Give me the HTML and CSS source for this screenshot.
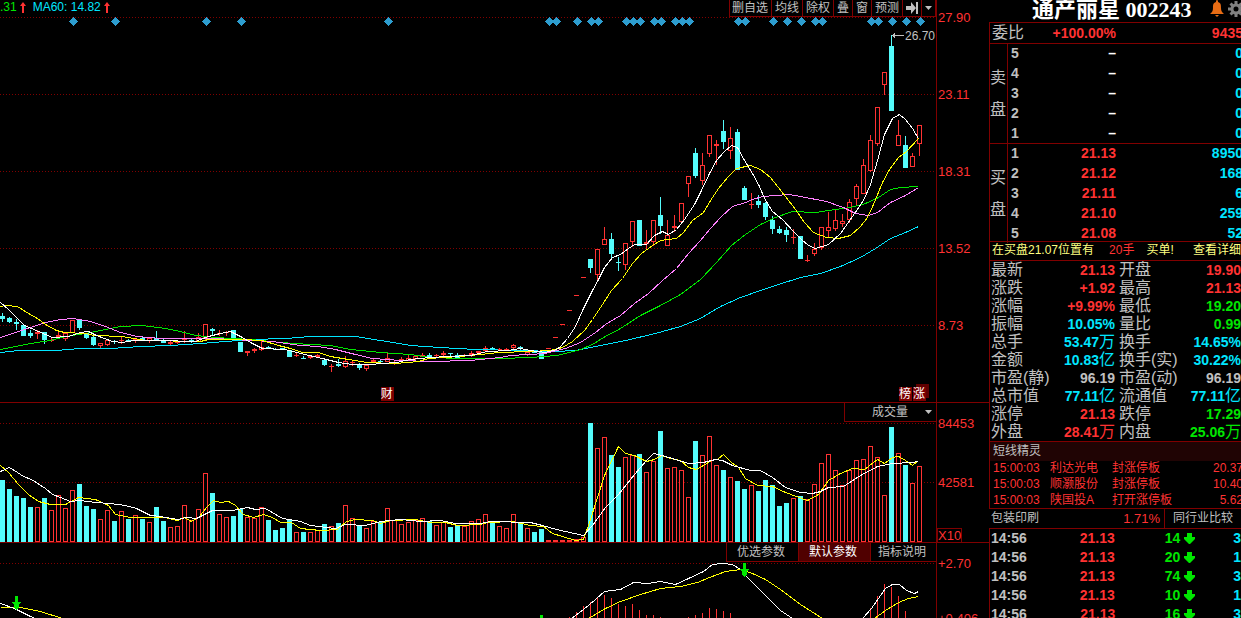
FILE: index.html
```html
<!DOCTYPE html>
<html lang="zh-CN">
<head>
<meta charset="utf-8">
<title>通产丽星 002243</title>
<link rel="stylesheet" href="styles.css">
</head>
<body>
<div class="app">
  <main class="charts">
    <section class="pane price-pane">
      <svg class="plot" id="price" viewBox="0 0 936 402" preserveAspectRatio="none"></svg>
      <header class="pane-head">
        <div class="averages">
          <span class="green">.31</span>
          <svg class="up" viewBox="0 0 6 11"><path d="M3 0L6 4H4V11H2V4H0Z"/></svg>
          <span class="cyan">MA60: 14.82</span>
          <svg class="up" viewBox="0 0 6 11"><path d="M3 0L6 4H4V11H2V4H0Z"/></svg>
        </div>
        <nav class="toolbar">
          <button>删自选</button><button>均线</button><button>除权</button><button>叠</button><button>窗</button><button>预测</button><button aria-label="移到最后"><svg width="12" height="12" viewBox="0 0 12 12"><path d="M0 4H5V0L10 6L5 12V8H0ZM10 0H12V12H10Z"/></svg></button><button aria-label="更多"><svg width="7" height="4" viewBox="0 0 7 4"><path d="M0 0H7L3.500 4Z"/></svg></button>
        </nav>
      </header>
      <span class="badge finance">财</span>
      <span class="badge shade"></span>
      <span class="badge rank">榜</span>
      <span class="badge rise">涨</span>
    </section>
    <aside class="axis price-axis"><span>27.90</span><span>23.11</span><span>18.31</span><span>13.52</span><span>8.73</span></aside>

    <section class="pane">
      <svg class="plot" id="volume" viewBox="0 402 936 140" preserveAspectRatio="none"></svg>
      <header class="pane-head">
        <label class="indicator"><select aria-label="指标"><option>成交量</option></select><svg width="7" height="4" viewBox="0 0 7 4"><path d="M0 0H7L3.500 4Z"/></svg></label>
      </header>
    </section>
    <aside class="axis volume-axis"><span>84453</span><span>42581</span><span class="unit">X10</span></aside>

    <section class="pane">
      <svg class="plot" id="macd" viewBox="0 542 936 76" preserveAspectRatio="none"></svg>
      <header class="pane-head">
        <nav class="tabs"><button>优选参数</button><button class="active">默认参数</button><button>指标说明</button></nav>
      </header>
    </section>
    <aside class="axis macd-axis"><span>+2.70</span><span>+0.406</span></aside>
  </main>

  <aside class="quote">
    <header class="title">
      <h1>通产丽星 002243</h1>
      <svg class="bell" viewBox="0 0 14 17"><path d="M7 0C8 0 8 1 8 2C11 3 11 5 11 8C11 11 12 12 14 14H0C2 12 3 11 3 8C3 5 3 3 6 2C6 1 6 0 7 0ZM5 15H9L7 17Z"/></svg>
      <svg class="gear" viewBox="-8 -8 16 16"><circle r="4"/><path d="M0-8V-4M0 8V4M-8 0H-4M8 0H4M-5.500-5.500L-3-3M5.500 5.500L3 3M-5.500 5.500L-3 3M5.500-5.500L3-3"/></svg>
    </header>
    <div class="ratio bleed"><span class="label">委比</span><b class="red">+100.00%</b><b class="red">9435</b></div>
    <div class="book">
      <div class="side"><span>卖</span><span>盘</span></div>
      <table class="orders">
        <tr><th>5</th><td>–</td><td>0</td></tr>
        <tr><th>4</th><td>–</td><td>0</td></tr>
        <tr><th>3</th><td>–</td><td>0</td></tr>
        <tr><th>2</th><td>–</td><td>0</td></tr>
        <tr><th>1</th><td>–</td><td>0</td></tr>
      </table>
    </div>
    <div class="book buy">
      <div class="side"><span>买</span><span>盘</span></div>
      <table class="orders bids">
        <tr><th>1</th><td>21.13</td><td>8950</td></tr>
        <tr><th>2</th><td>21.12</td><td>168</td></tr>
        <tr><th>3</th><td>21.11</td><td>6</td></tr>
        <tr><th>4</th><td>21.10</td><td>259</td></tr>
        <tr><th>5</th><td>21.08</td><td>52</td></tr>
      </table>
    </div>
    <div class="notice"><span>在买盘21.07位置有</span><span class="red">20手</span><span>买单!</span><a href="#detail">查看详细</a></div>
    <dl class="stats">
      <dt>最新</dt><dd class="red">21.13</dd><dt>开盘</dt><dd class="red">19.90</dd>
      <dt>涨跌</dt><dd class="red">+1.92</dd><dt>最高</dt><dd class="red">21.13</dd>
      <dt>涨幅</dt><dd class="red">+9.99%</dd><dt>最低</dt><dd class="green">19.20</dd>
      <dt>振幅</dt><dd class="cyan">10.05%</dd><dt>量比</dt><dd class="green">0.99</dd>
      <dt>总手</dt><dd class="cyan">53.47<i>万</i></dd><dt>换手</dt><dd class="cyan">14.65%</dd>
      <dt>金额</dt><dd class="cyan">10.83<i>亿</i></dd><dt>换手(实)</dt><dd class="cyan">30.22%</dd>
      <dt>市盈(静)</dt><dd>96.19</dd><dt>市盈(动)</dt><dd>96.19</dd>
      <dt>总市值</dt><dd class="cyan">77.11<i>亿</i></dd><dt>流通值</dt><dd class="cyan">77.11<i>亿</i></dd>
      <dt>涨停</dt><dd class="red">21.13</dd><dt>跌停</dt><dd class="green">17.29</dd>
      <dt>外盘</dt><dd class="red">28.41<i>万</i></dd><dt>内盘</dt><dd class="green">25.06<i>万</i></dd>
    </dl>
    <h2 class="feed-title">短线精灵</h2>
    <div class="feed bleed">
      <span>15:00:03</span><span>利达光电</span><span>封涨停板</span><span>20.37</span>
      <span>15:00:03</span><span>顺灏股份</span><span>封涨停板</span><span>10.40</span>
      <span>15:00:03</span><span>陕国投A</span><span>打开涨停板</span><span>5.62</span>
    </div>
    <div class="industry"><span>包装印刷</span><span class="change">1.71%</span><button>同行业比较</button></div>
    <table class="ticks">
      <tr><td>14:56</td><td>21.13</td><td>14</td><td><svg class="down" viewBox="0 0 11 11"><path d="M3 0H8V4H11V6L6 11H5L0 6V4H3Z"/></svg></td><td>3</td></tr>
      <tr><td>14:56</td><td>21.13</td><td>20</td><td><svg class="down" viewBox="0 0 11 11"><path d="M3 0H8V4H11V6L6 11H5L0 6V4H3Z"/></svg></td><td>1</td></tr>
      <tr><td>14:56</td><td>21.13</td><td>74</td><td><svg class="down" viewBox="0 0 11 11"><path d="M3 0H8V4H11V6L6 11H5L0 6V4H3Z"/></svg></td><td>3</td></tr>
      <tr><td>14:56</td><td>21.13</td><td>10</td><td><svg class="down" viewBox="0 0 11 11"><path d="M3 0H8V4H11V6L6 11H5L0 6V4H3Z"/></svg></td><td>1</td></tr>
      <tr><td>14:56</td><td>21.13</td><td>16</td><td><svg class="down" viewBox="0 0 11 11"><path d="M3 0H8V4H11V6L6 11H5L0 6V4H3Z"/></svg></td><td>3</td></tr>
    </table>
  </aside>
</div>
<script src="chart.js"></script>
</body>
</html>
```

FILE: styles.css
```css
* { box-sizing: border-box; }
body {
  margin: 0;
  overflow: hidden;
  background: #000;
  color: #c0c0c0;
  font: 12px/16px "Liberation Sans", "Noto Sans CJK SC", sans-serif;
}
button, select {
  margin: 0;
  padding: 0;
  border: 0;
  background: none;
  color: inherit;
  font: inherit;
  cursor: pointer;
}
table { border-collapse: collapse; }
td, th { padding: 0; }
.red { color: #ff3232; }
.green { color: #00e600; }
.cyan { color: #00e6ff; }

.app {
  display: grid;
  grid-template-columns: 1fr 252px;
  height: 100vh;
}

/* charts */
.charts {
  display: grid;
  grid-template-columns: 1fr 53px;
  grid-template-rows: 402fr 140fr 76fr;
  min-width: 0;
  overflow: hidden;
}
.pane {
  position: relative;
  display: grid;
  min-width: 0;
  min-height: 0;
  overflow: hidden;
  border-right: 1px solid #800000;
  margin-right: -1px;
}
.plot, .pane-head { grid-area: 1 / 1; }
.plot { width: 100%; height: 100%; shape-rendering: crispEdges; }
.pane-head {
  position: relative;
  display: flex;
  justify-content: flex-end;
  align-self: start;
}
.axis {
  display: flex;
  flex-direction: column;
  align-items: flex-start;
  min-height: 0;
  padding-left: 2px;
  overflow: hidden;
  color: #ff3232;
  font-size: 13px;
}
.volume-axis, .macd-axis { border-top: 1px solid #800000; }
.price-axis { padding-top: 10px; gap: 61px; }
.volume-axis { padding-top: 13px; gap: 43px; }
.macd-axis { padding-top: 13px; gap: 39px; }
.unit {
  margin: -6px 0 0 -1px;
  border: 1px solid #800000;
  line-height: 13px;
}
.averages {
  display: flex;
  align-items: center;
  gap: 3px;
  height: 14px;
  margin-right: auto;
}
.averages .cyan { margin-left: 4px; }
.up { width: 6px; height: 11px; fill: #ff3232; }
.toolbar {
  display: flex;
  border: solid #800000;
  border-width: 0 0 1px 1px;
  background: #000;
}
.toolbar button {
  height: 16px;
  padding: 0 3px;
  border-right: 1px solid #800000;
  line-height: 15px;
}
.toolbar button:first-child { padding-left: 2px; }
.toolbar svg, .indicator svg { display: block; fill: #c0c0c0; }
.indicator {
  display: flex;
  align-items: center;
  gap: 16px;
  height: 20px;
  padding: 0 4px 0 27px;
  border: solid #800000;
  border-width: 1px 0 1px 1px;
  background: #000;
}
.indicator select { appearance: none; width: 37px; outline: 0; }
.tabs {
  display: flex;
  border: 1px solid #800000;
  border-right: 0;
  background: #000;
}
.tabs button { height: 18px; padding: 0 13px 0 10px; }
.tabs button:last-child { padding: 0 10px 0 7px; }
.tabs .active { background: #500000; color: #fff; border: solid #800000; border-width: 0 1px; }
.badge {
  position: absolute;
  bottom: 1px;
  width: 13px;
  height: 14px;
  background: #7c0000;
  color: #fff;
  line-height: 14px;
}
.finance { left: 41%; margin-left: -3px; }
.rank { right: 24px; }
.rise { right: 10px; }
.shade { right: 7px; bottom: 4px; background: #600000; }

/* quote panel */
.quote {
  display: flex;
  flex-direction: column;
  min-width: 0;
  overflow: hidden;
}
.quote > * { flex: none; border-left: 1px solid #800000; }
.quote > .title {
  display: flex;
  align-items: flex-start;
  height: 22px;
  padding-left: 42px;
  border-left: 1px solid transparent;
}
.title h1 {
  flex: 1;
  margin: 0;
  color: #fff;
  font: bold 22px/20px "Liberation Serif", "Noto Sans CJK SC", serif;
  white-space: nowrap;
}
.bell { width: 14px; height: 17px; margin-right: 4px; fill: #e86c14; }
.gear { width: 16px; height: 16px; margin: 1px -3px 0 0; flex: none; fill: none; stroke: #808080; stroke-width: 3px; }
.bleed, .orders { margin-right: -2px; }
.ratio, .orders, .ticks, .stats dd { font-size: 14px; font-weight: bold; }
.ratio {
  display: grid;
  grid-template-columns: 36px 88px 1fr;
  height: 21px;
  padding-left: 2px;
  border-top: 1px solid #800000;
  line-height: 20px;
  text-align: right;
}
.label { font-size: 16px; font-weight: normal; text-align: left; }
.book {
  display: grid;
  grid-template-columns: 18px 1fr;
  height: 100px;
  border-top: 1px solid #800000;
}
.buy { height: 98px; }
.side {
  display: flex;
  flex-direction: column;
  justify-content: center;
  gap: 16px;
  border-right: 1px solid #800000;
  font-size: 16px;
}
.orders { width: calc(100% + 2px); margin-top: -1px; line-height: 20px; }
.orders tr { height: 20px; }
.orders th { width: 18px; padding-left: 3px; text-align: left; }
.orders td { width: 90px; color: #fff; text-align: right; }
.bids td { color: #ff3232; }
.orders td:last-child { width: auto; color: #00e6ff; }
.notice {
  display: flex;
  height: 19px;
  padding-left: 2px;
  border-top: 1px solid #800000;
  color: #ffff80;
  line-height: 17px;
  white-space: nowrap;
}
.notice .red { margin: 0 12px 0 15px; }
.notice a { margin-left: auto; color: inherit; text-decoration: none; }
.stats {
  display: grid;
  grid-template-columns: 62px 62px 66px 1fr;
  margin: 0;
  padding-left: 1px;
  border-top: 1px solid #800000;
  line-height: 18px;
}
.stats dt { height: 18px; font-size: 16px; white-space: nowrap; }
.stats dt:nth-of-type(even) { padding-left: 4px; }
.stats dd { height: 18px; margin: 0; text-align: right; white-space: nowrap; }
.stats i { font-size: 16px; font-style: normal; font-weight: normal; }
.feed-title {
  height: 20px;
  margin: 0;
  padding-left: 3px;
  border-top: 1px solid #800000;
  background: #200404;
  font-size: 12px;
  font-weight: normal;
  line-height: 19px;
}
.feed {
  display: grid;
  grid-template-columns: 57px 62px 1fr auto;
  row-gap: 1px;
  padding-left: 3px;
  color: #ff3232;
  line-height: 15px;
}
.feed span:nth-child(4n) { text-align: right; }
.industry {
  display: grid;
  grid-template-columns: 1fr auto 77px;
  height: 21px;
  padding-left: 2px;
  border: solid #800000;
  border-width: 1px 0;
  line-height: 19px;
}
.change { padding-right: 4px; color: #ff3232; font-size: 13px; }
.industry button { border-left: 1px solid #800000; }
.ticks { width: 100%; }
.ticks tr { height: 19px; }
.ticks td { line-height: 19px; text-align: right; }
.ticks td:nth-child(1) { width: 46px; padding-left: 1px; text-align: left; }
.ticks td:nth-child(2) { width: 81px; color: #ff3232; }
.ticks td:nth-child(3) { width: 66px; color: #00e600; }
.ticks td:nth-child(4) { width: 15px; }
.ticks td:nth-child(5) { padding-left: 38px; color: #00e6ff; }
.down { display: block; width: 11px; height: 11px; margin-left: auto; fill: #00e600; }
```

FILE: chart.js
```js
const UP = '#ff3232', DOWN = '#54fcfc', LINE = '#800000';
const STEP = 7;
const price = [], volume = [], macd = [];

const rect = (x, y, w, h, fill) => `<rect x="${x}" y="${y}" width="${w}" height="${h}" fill="${fill}"/>`;
const poly = (points, color) => `<polyline points="${points}" transform="translate(.5 .5)" fill="none" stroke="${color}"/>`;
const grid = y => `<path d="M0 ${y}.5H935" stroke="${LINE}" stroke-dasharray="1 2"/>`;
const box = (i, top, bottom) => bottom - top < 3
  ? rect(i * STEP, top, 5, Math.max(1, bottom - top), UP)
  : `<rect x="${i * STEP + .5}" y="${top + .5}" width="4" height="${bottom - top - 1}" fill="#000" stroke="${UP}"/>`;

// Each entry is "high open/close open/close low", in thirds of a pixel below `base`; a trailing c marks a fall.
function candles(start, base, list) {
  list.trim().split(/\s*,\s*/).forEach((entry, n) => {
    const i = start + n, down = entry.endsWith('c');
    const [hi, top, bottom, low] = entry.replace('c', '').split(' ').map(v => Math.round(base + v / 3));
    price.push(rect(i * STEP + 2, hi, 1, Math.max(1, low - hi), down ? DOWN : UP));
    price.push(down ? rect(i * STEP, top, 5, Math.max(1, bottom - top), DOWN) : box(i, top, bottom));
  });
}

[17, 94, 171, 248, 325].forEach(y => price.push(grid(y)));
[10,16,29,34,55,78,79,82,84,85,89,90,91,93,94,96,97,98,105,106,110,112,114,116,117,124,125,127,129,131]
  .forEach(i => price.push(`<path d="M${i * STEP + 3.5} 17l4.500 4.500l-4.500 4.500l-4.500-4.500z" fill="#2d9dcf"/>`));

candles(0, 290, `69 78 87 96c,80 84 96 99c,87 96 102 120c,104 104 138 138c,120 129 138 144c,120 126 132 147,126 126 150 162c,
141 150 153 156,123 135 140 143,129 129 147 153,90 90 129 129,88 90 114 120c,129 129 144 147c,135 141 165 168c,159 159 168 174,
150 150 165 168,149 153 156 162c,141 150 153 162,146 150 153 155c,147 148 152 159,141 144 149 151c,144 144 153 159,
123 144 149 150c,147 151 159 159c,153 156 162 165,150 155 159 162,123 144 151 160,146 149 154 158c,129 141 156 156,
102 102 144 150,113 117 123 134c,120 130 132 138,123 125 128 137,120 120 150 150c,156 156 186 186c,183 183 189 198,
173 177 183 189,153 171 180 183,168 171 174 178c,173 176 179 181c,173 174 180 181c,180 180 201 201c,188 195 198 201,
198 204 207 207c,196 198 204 207,192 195 200 203,205 210 225 228c,222 228 231 246,207 222 228 231c,197 213 231 234,
210 216 219 228,219 222 234 240c,222 226 237 243,203 210 216 218,207 213 216 222c,186 205 216 217,213 218 221 225,
201 208 212 213,192 204 213 213,194 198 207 209,189 195 200 201,189 196 200 204c,192 195 199 200,183 189 196 198,
189 189 192 200c,189 195 204 204c,192 195 199 200,183 189 196 201,183 183 189 192,168 174 184 186,171 174 180 181c,
174 176 180 182,174 177 180 182,162 165 174 178,168 171 178 180c,183 186 195 198,182 183 188 189c,183 186 207 207c,
174 174 177 177,141 141 144 144,102 102 105 105,60 60 63 63,15 15 18 18`);
candles(83, 180, `291 291 294 294,237 237 264 279c,207 207 285 300,141 177 195 195,159 177 222 237c,231 246 249 273c,
189 189 255 270,123 123 186 201,120 120 198 198c,150 186 192 210,120 120 186 198,51 105 138 162c,120 165 198 198,
105 138 144 156,69 69 126 130`);
candles(98, 0, `528 528 552 591,444 459 528 534c,459 495 543 555,405 405 462 471,420 432 438 495,360 393 426 447c,
381 414 453 477,387 396 510 510c`);
candles(106, 180, `18 24 60 60c,39 72 75 87,45 63 75 84c,66 69 111 120c,108 120 147 162c,138 147 159 162c,141 150 165 186c,
147 171 174 192,168 168 237 237c,225 240 243 246,189 207 222 228,141 141 204 210,96 141 153 171,90 120 147 153,
102 123 132 141,57 66 120 129,12 18 57 78`);
candles(123, 0, `477 495 582 582,405 420 513 516,321 321 432 438,216 216 255 285,105 138 333 333c,360 405 438 438,
408 435 504 504c,459 468 501 501,375 375 432 468`);

price.push(poly('0,352 18,350 55,350 80,348 110,348 140,346 170,345 200,343 225,341 250,339 285,338 310,336 355,336 380,340 410,345 440,347 475,349 520,350 555,351 575,350 600,345 625,340 655,333 680,326 700,318 720,306 740,297 760,290 775,285 800,277 820,273 840,266 860,257 875,248 890,238 905,232 918,226', '#00e6ff'));
price.push(poly('0,349 15,346 30,343 50,340 65,336 85,333 105,329 120,326 142,325 165,328 180,331 195,335 215,337 250,339 280,342 310,344 330,345 350,349 380,352 410,354 430,357 460,358 500,358 530,357 556,355 565,353 580,349 592,344 603,337 620,328 640,315 660,305 680,294 700,279 716,262 731,245 745,234 760,224 775,217 792,211 815,212 835,209 850,207 865,203 878,197 890,189 900,187 918,186', '#00e600'));
price.push(poly('0,337 12,333 30,327 45,322 60,319 73,318 90,321 105,326 120,332 137,336 160,338 215,338 250,340 272,341 300,345 318,346 335,349 355,354 372,358 400,360 430,361 470,360 500,357 510,355 545,353 556,350 565,348 580,342 595,332 605,324 620,315 634,303 648,293 662,280 676,268 688,253 700,240 710,228 720,217 732,206 745,202 752,199 762,196 788,194 800,196 826,201 843,207 855,213 868,215 877,212 890,202 905,195 918,187', '#ff80ff'));
price.push(poly('0,306 6,305 17,306 28,313 37,318 45,324 56,330 64,332 85,333 94,335 122,336 133,338 145,340 200,341 208,339 240,339 262,340 278,345 290,348 302,352 318,352 330,356 348,359 366,362 395,363 418,361 428,358 460,356 480,354 498,352 530,351 550,350 562,347 572,341 584,330 592,319 602,304 611,290 622,278 632,263 641,253 652,245 660,240 676,238 683,232 692,220 703,212 712,197 718,188 728,176 736,168 750,165 760,169 770,177 785,196 795,209 804,222 813,232 826,237 838,238 850,235 860,226 867,217 873,204 882,182 889,169 898,157 906,151 918,138', '#ffff00'));
price.push(poly('0,302 9,310 17,318 24,325 38,331 52,337 68,336 80,332 88,331 96,335 112,341 122,342 133,340 160,340 195,341 208,336 220,333 230,331 240,336 252,343 262,348 285,349 300,353 322,358 338,362 352,364 370,364 382,363 396,362 410,359 430,357 448,356 470,355 487,351 508,350 520,348 530,350 545,352 556,349 560,346 567,338 575,326 583,308 592,290 598,279 604,267 612,257 620,254 628,248 634,244 646,244 654,235 662,231 668,234 676,229 684,219 694,204 700,192 709,173 716,160 724,151 731,145 737,147 744,160 752,173 759,186 764,198 772,211 782,219 793,231 801,239 808,245 815,248 828,244 840,233 852,216 863,200 870,184 877,160 884,134 892,118 899,114 905,119 912,128 918,138', '#fff'));
price.push('<path d="M892 35.5H904M893.5 34V37M894.5 33V38" stroke="#c0c0c0"/><text x="905" y="40" font-size="12" fill="#c0c0c0">26.70</text>');

// Volume bars: top edge in thirds of a pixel below y = 290, c for a falling day.
volume.push(rect(0, 402, 936, 1, LINE), grid(423), grid(482));
`570c 597c 618c 624c 651c 651 624c 660 615 655 600 582c 648c 657c 687 660 693c 663 687c 675 687c 696 651c 693c 711 708 645 690
657 549 609c 672 681 678c 657c 681 684 651 690c 720c 714c 687c 726 726c 726 720 702c 708 699c 645 684 705c 714 693 696c 654 690
702 696 690 684 694c 705 696 711c 708c 708 693 687 672 699c 708 714 672 699c 714 726c 717c 750 750 750 750 748 741 399c 474 441
495c 531c 501 495 492c 546 513 423c 534 531 540 621 453c 495 438 525 540c 561 573c 597c 585 603c 570c 585c 648c 639c 624 618c
627 582 519 492 540 585 540 510 507 468 501 615 411c 489 525c 579 528`.split(/\s+/).forEach((v, i) => {
  const top = Math.round(290 + parseInt(v) / 3);
  volume.push(v.endsWith('c') ? rect(i * STEP, top, 5, 542 - top, DOWN) : box(i, top, 542));
});
volume.push(poly('0,465 8,472 18,484 28,494 38,501 50,504 65,504 78,497 95,499 108,505 115,514 130,517 165,517 177,520 184,517 191,521 199,516 206,507 213,500 220,502 228,501 235,505 243,514 253,517 263,514 272,517 280,522 291,522 300,528 320,530 337,529 346,521 355,519 372,520 380,523 390,520 415,519 430,522 445,522 457,525 480,524 487,522 512,521 530,525 543,526 552,533 562,536 575,540 583,539 590,519 604,475 618,446 625,453 634,455 646,461 654,459 661,455 670,458 680,460 688,467 696,469 703,465 711,460 717,459 723,454 731,462 738,467 745,478 757,485 772,486 785,492 807,500 818,494 828,480 840,473 852,468 864,469 877,459 884,463 892,457 898,456 905,460 912,465 918,460', '#ffff00'));
volume.push(poly('0,471 9,467 17,472 23,476 31,479 45,488 52,494 60,497 70,501 80,500 95,502 110,503 125,505 136,508 150,515 160,516 177,519 186,517 196,518 212,510 232,510 247,507 255,509 265,508 282,518 300,521 310,525 335,528 345,524 365,525 380,521 400,519 420,521 440,520 455,523 480,523 490,521 530,522 542,525 556,529 583,535 592,525 605,507 618,494 634,474 646,460 653,453 662,455 675,459 688,463 703,462 715,459 722,460 732,465 750,470 760,470 772,477 785,487 800,492 812,493 820,491 828,487 843,486 860,475 877,466 892,463 912,462 918,461', '#fff'));

macd.push(rect(0, 542, 936, 1, LINE), grid(563));
const bars = { 81: 617, 82: 612, 83: 606, 84: 602, 85: 598, 86: 595, 87: 598, 88: 604, 89: 606, 90: 604, 91: 610, 92: 615, 93: 615,
  94: 617, 98: 617, 99: 615, 100: 613, 101: 608, 102: 609, 103: 611, 104: 613, 124: 608, 125: 596, 126: 584, 127: 587, 128: 596, 129: 611 };
for (const i in bars) macd.push(rect(i * STEP + 2, bars[i], 1, 618 - bars[i], UP));
macd.push(poly('0,607 20,607 40,611 62,618', '#ffff00'), poly('0,603 14,608 30,616 35,618', '#fff'));
macd.push(poly('588,618 605,608 620,601 640,594 660,588 680,586 697,582 709,577 725,571 740,569 752,573 765,579 780,589 800,604 822,618', '#ffff00'));
macd.push(poly('571,618 583,609 595,599 604,591 620,589 633,582 648,583 660,581 675,584 688,578 703,571 712,564 722,563 732,564 740,569 745,575 756,586 770,600 780,610 792,618', '#fff'));
macd.push(poly('874,618 885,610 898,602 908,598 918,596', '#ffff00'), poly('862,618 871,608 878,598 885,588 892,584 899,584 906,590 914,593 918,591', '#fff'));
[[12, 596], [740, 563]].forEach(([x, y]) => macd.push(`<path d="M${x + 3} ${y}h3v6h3v1l-2 1v3l-2 3h-1l-2-3v-3l-2-1v-1h3z" fill="#00e600"/>`));
macd.push(rect(540, 615, 3, 3, '#00e600'));

document.getElementById('price').innerHTML = price.join('');
document.getElementById('volume').innerHTML = volume.join('');
document.getElementById('macd').innerHTML = macd.join('');
```
